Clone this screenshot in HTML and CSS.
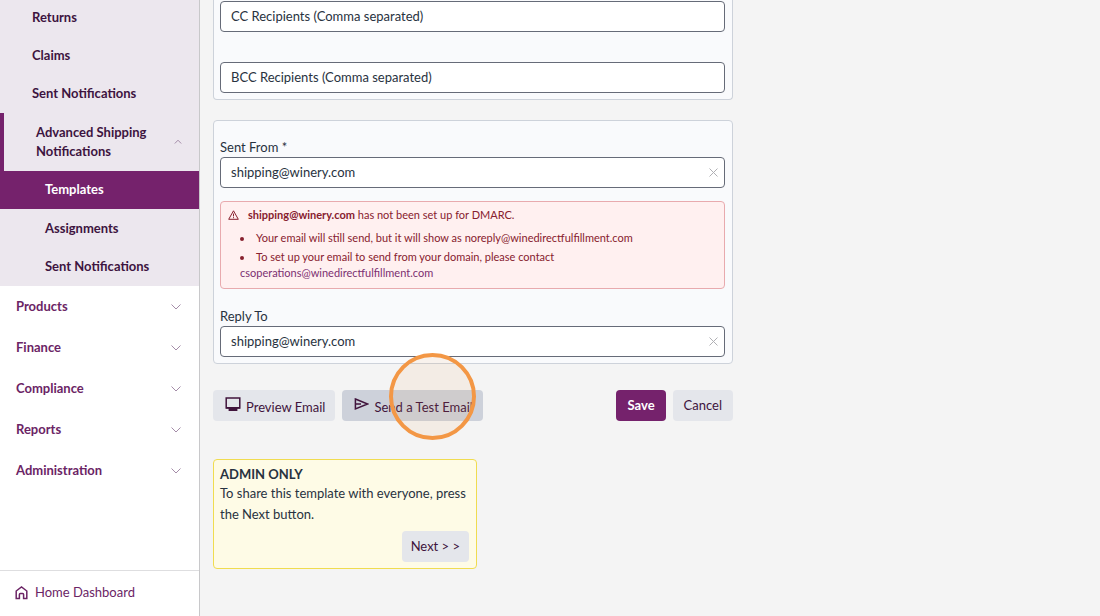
FILE: index.html
```html
<!DOCTYPE html>
<html lang="en">
	<head>
		<meta charset="utf-8">
		<title>Templates</title>
		<link rel="stylesheet" href="styles.css">
	</head>
	<body>
		<div class="sidebar">
			<nav class="menu">
				<ul class="submenu">
					<li><a href="#">Returns</a></li>
					<li><a href="#">Claims</a></li>
					<li><a href="#">Sent Notifications</a></li>
					<li class="open">
						<a href="#">
							<span>Advanced Shipping Notifications</span>
							<svg width="8" height="7" viewBox="0 0 8 7"><path d="M0.8 4.5 L4 1.2 L7.2 4.5"/></svg>
						</a>
						<ul>
							<li><a class="active" href="#">Templates</a></li>
							<li><a href="#">Assignments</a></li>
							<li><a href="#">Sent Notifications</a></li>
						</ul>
					</li>
				</ul>
				<ul class="sections">
					<li><a href="#"><span>Products</span><svg width="10" height="6" viewBox="0 0 10 6"><path d="M0.5 0.5 L5 5 L9.5 0.5"/></svg></a></li>
					<li><a href="#"><span>Finance</span><svg width="10" height="6" viewBox="0 0 10 6"><path d="M0.5 0.5 L5 5 L9.5 0.5"/></svg></a></li>
					<li><a href="#"><span>Compliance</span><svg width="10" height="6" viewBox="0 0 10 6"><path d="M0.5 0.5 L5 5 L9.5 0.5"/></svg></a></li>
					<li><a href="#"><span>Reports</span><svg width="10" height="6" viewBox="0 0 10 6"><path d="M0.5 0.5 L5 5 L9.5 0.5"/></svg></a></li>
					<li><a href="#"><span>Administration</span><svg width="10" height="6" viewBox="0 0 10 6"><path d="M0.5 0.5 L5 5 L9.5 0.5"/></svg></a></li>
				</ul>
			</nav>
			<a class="home" href="#">
				<svg width="13" height="14" viewBox="0 0 13 14"><path d="M1.2 5 L6.5 1 L11.8 5 V12.4 H8.6 V8.4 Q8.6 7.4 7.6 7.4 H5.4 Q4.4 7.4 4.4 8.4 V12.4 H1.2 Z"/></svg>
				<span>Home Dashboard</span>
			</a>
		</div>
		<main class="content">
			<form>
				<section class="card recipients">
					<input type="text" aria-label="CC Recipients" placeholder="CC Recipients (Comma separated)">
					<input type="text" aria-label="BCC Recipients" placeholder="BCC Recipients (Comma separated)">
				</section>
				<section class="card sender">
					<label for="sentFrom">Sent From *</label>
					<div class="field">
						<input type="text" id="sentFrom" value="shipping@winery.com">
						<button class="clear" type="button" aria-label="Clear"><svg width="9" height="9" viewBox="0 0 9 9"><path d="M0.5 0.5 L8.5 8.5 M8.5 0.5 L0.5 8.5"/></svg></button>
					</div>
					<div class="alert">
						<p>
							<svg width="11" height="10" viewBox="0 0 11 10"><path d="M5.5 0.8 L10.3 9.3 H0.7 Z M5.5 3.6 V6.4 M5.5 7.2 V8.2"/></svg>
							<span><strong>shipping@winery.com</strong> has not been set up for DMARC.</span>
						</p>
						<ul>
							<li>Your email will still send, but it will show as noreply@winedirectfulfillment.com</li>
							<li>To set up your email to send from your domain, please contact<br><a href="#">csoperations@winedirectfulfillment.com</a></li>
						</ul>
					</div>
					<label for="replyTo">Reply To</label>
					<div class="field">
						<input type="text" id="replyTo" value="shipping@winery.com">
						<button class="clear" type="button" aria-label="Clear"><svg width="9" height="9" viewBox="0 0 9 9"><path d="M0.5 0.5 L8.5 8.5 M8.5 0.5 L0.5 8.5"/></svg></button>
					</div>
				</section>
				<div class="actions">
					<button class="btn icon-btn" type="button">
						<svg width="16" height="15" viewBox="0 0 16 15"><path d="M1.2 1 H14.8 V11 H1.2 Z"/><path class="solid" d="M1 10 H15 V11.6 H12.4 V14 H3.6 V11.6 H1 Z"/></svg>
						<span>Preview Email</span>
					</button>
					<div class="spot">
						<button class="btn icon-btn hover" type="button">
							<svg width="15" height="15" viewBox="0 0 15 15"><path d="M1.4 2 L13.6 7 L1.4 12 Z M1.4 7 H7"/></svg>
							<span>Send a Test Email</span>
						</button>
						<i class="ring"></i>
					</div>
					<button class="btn save" type="submit">Save</button>
					<button class="btn" type="button">Cancel</button>
				</div>
			</form>
			<section class="admin">
				<h2>ADMIN ONLY</h2>
				<p>To share this template with everyone, press the Next button.</p>
				<button class="btn" type="button">Next &gt; &gt;</button>
			</section>
		</main>
	</body>
</html>
```
FILE: styles.css
```css
body, h2, p, ul{
	margin: 0;
	padding: 0;
}
*{
	box-sizing: border-box;
}
body{
	display: flex;
	height: 100vh;
	overflow: hidden;
	background: #f4f4f4;
	color: #283240;
	font: 13px/19px Lato, "Liberation Sans", sans-serif;
}
ul{
	list-style: none;
}
a{
	color: #6b2465;
	text-decoration: none;
}
svg{
	flex: none;
	fill: none;
	stroke: currentColor;
}
input, button{
	font: inherit;
}

/* sidebar */
.sidebar{
	flex: none;
	display: flex;
	flex-direction: column;
	width: 200px;
	background: #fff;
	border-right: 1px solid #c8c8ca;
}
.menu{
	flex: 1;
	overflow: hidden;
}
.menu a{
	display: flex;
	align-items: center;
	justify-content: space-between;
	font-weight: bold;
}
.menu svg{
	color: #a48ca8;
}
.submenu{
	margin-top: -1px;
	padding-bottom: 1px;
	background: #ece7ee;
}
.submenu a{
	min-height: 38px;
	padding: 0 17px 2px 32px;
	color: #3d1440;
}
.submenu .open > a{
	min-height: 58px;
	padding-bottom: 0;
	border-left: 4px solid #75226c;
}
.submenu .open > a span{
	width: 120px;
}
.submenu ul a{
	padding: 0 17px 0 45px;
}
.submenu ul .active{
	padding-bottom: 2px;
	background: #75226c;
	color: #fff;
}
.sections a{
	height: 41px;
	padding: 0 18px 0 16px;
}
.home{
	display: flex;
	align-items: center;
	gap: 7px;
	height: 46px;
	padding: 0 15px 2px;
	border-top: 1px solid #dedee0;
}
.home svg{
	stroke-width: 1.5;
}

/* form */
.content{
	flex: 1;
	padding: 0 13px;
}
.card{
	max-width: 520px;
	padding: 6px 7px 6px 6px;
	background: #f9fafc;
	border: 1px solid #cdd2da;
	border-radius: 4px;
}
.card input{
	display: block;
	width: 100%;
	height: 31px;
	padding: 0 10px 2px;
	background: #fff;
	border: 1px solid #666b78;
	border-radius: 4px;
	color: #283240;
}
.card input::placeholder{
	color: #283240;
	opacity: 1;
}
.recipients{
	display: grid;
	gap: 30px;
	margin-bottom: 20px;
	padding-top: 1px;
	border-top: none;
	border-radius: 0 0 4px 4px;
}
.sender{
	padding-top: 17px;
}
.sender label{
	display: block;
}
.field{
	position: relative;
}
.clear{
	position: absolute;
	top: 0;
	right: 0;
	display: flex;
	align-items: center;
	height: 31px;
	padding: 0 7px;
	background: none;
	border: none;
	color: #b0b0b4;
}
.alert{
	margin: 13px 0 18px;
	padding: 5px 7px 7px;
	background: #fff0f0;
	border: 1px solid #e8aaae;
	border-radius: 4px;
	color: #87202e;
	font-size: 11px;
	line-height: 16px;
}
.alert p{
	display: flex;
	align-items: center;
	gap: 9px;
	margin-bottom: 7px;
}
.alert ul{
	padding-left: 12px;
	list-style: disc inside;
}
.alert li + li{
	margin-top: 3px;
}
.alert a{
	color: #7c2f70;
}

/* buttons */
.actions{
	display: flex;
	gap: 7px;
	max-width: 520px;
	margin: 26px 0 38px;
}
.btn{
	height: 31px;
	padding: 0 11px;
	background: #e4e6eb;
	border: none;
	border-radius: 4px;
	color: #40143c;
}
.icon-btn{
	display: flex;
	gap: 5px;
	padding: 7px 10px 0 12px;
}
.icon-btn svg{
	stroke-width: 1.5;
}
.icon-btn span{
	padding-top: 1px;
}
.solid{
	fill: currentColor;
	stroke: none;
}
.hover{
	background: #cdd1da;
}
.save{
	margin-left: auto;
	background: #75226c;
	color: #fff;
	font-weight: bold;
}
.spot{
	position: relative;
}
.ring{
	position: absolute;
	top: -37px;
	left: 47px;
	width: 87px;
	height: 87px;
	background: rgba(243,151,69,0.08);
	border: 4px solid #f39745;
	border-radius: 50%;
	pointer-events: none;
}

/* admin note */
.admin{
	display: flex;
	flex-direction: column;
	max-width: 264px;
	padding: 6px 7px 6px 6px;
	background: #fefbe6;
	border: 1px solid #f0dc50;
	border-radius: 4px;
}
.admin h2{
	font-size: 13px;
	line-height: 17px;
}
.admin p{
	margin-bottom: 6px;
	line-height: 21px;
}
.admin .btn{
	align-self: flex-end;
	padding: 0 9px;
}
```
